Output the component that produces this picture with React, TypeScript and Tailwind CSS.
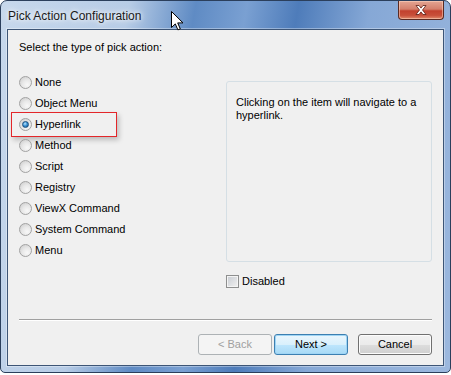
import React from 'react';

const options = [
  'None',
  'Object Menu',
  'Hyperlink',
  'Method',
  'Script',
  'Registry',
  'ViewX Command',
  'System Command',
  'Menu',
];

const Radio = ({ checked }: { checked?: boolean }) => (
  <span className="relative flex h-[13px] w-[13px] shrink-0 items-center justify-center rounded-full border border-[#a2a2a2] bg-[radial-gradient(circle_at_65%_70%,#f8f8f8_0%,#e8e8e8_45%,#c8c8c8_100%)]">
    {checked && (
      <span className="h-[7px] w-[7px] rounded-full border border-[#1b4f7e] bg-[radial-gradient(circle_at_40%_35%,#bfe6ff_0%,#3d95d6_45%,#0d4f8c_100%)]" />
    )}
  </span>
);

const CloseGlyph = () => (
  <svg width="12" height="10" viewBox="0 0 12 10">
    <path
      d="M1 0.5h3l2 2.6 2-2.6h3l-3.5 4.5 3.5 4.5h-3l-2-2.6-2 2.6h-3l3.5-4.5z"
      fill="#ffffff"
      stroke="#5c1c12"
      strokeWidth="0.8"
    />
  </svg>
);

const Cursor = () => (
  <svg width="13" height="20" viewBox="0 0 13 20" className="absolute left-[170px] top-[10px]">
    <path
      d="M0.5 0.5v16l3.8-3.6 2.6 6 2.4-1-2.6-6h5.3z"
      fill="#ffffff"
      stroke="#000000"
      strokeWidth="1"
      strokeLinejoin="round"
    />
  </svg>
);

export default function App() {
  return (
    <div className="h-[375px] w-[451px] bg-white font-['Liberation_Sans',Arial,sans-serif] text-[11px] text-black">
      <div className="relative flex h-[373px] w-[451px] flex-col rounded-t-[7px] rounded-b-[5px] border border-[#2b3f5c] bg-[linear-gradient(100deg,#c7d8ec_0%,#b7cce6_25%,#5f8bc4_38%,#7aa0d2_48%,#4e7cba_58%,#86a8d6_72%,#9cb8de_100%)] px-[6px] pb-[6px]">
        {/* Title bar */}
        <div className="flex h-[28px] items-start justify-between">
          <span className="pt-[8px] pl-[1px] text-[12px] leading-[14px] text-[#1a1a1a] [text-shadow:0_0_8px_#ffffff,0_0_4px_#ffffff]">
            Pick Action Configuration
          </span>
          <div className="flex h-[19px] w-[46px] items-center justify-center rounded-b-[4px] border border-t-0 border-[#5a2a22] bg-[linear-gradient(to_bottom,#e4a593_0%,#d4806c_45%,#c2412e_55%,#c8503a_80%,#e08a6c_100%)] shadow-[inset_0_0_0_1px_rgba(255,220,200,0.5)]">
            <CloseGlyph />
          </div>
        </div>

        {/* Client area */}
        <div className="flex flex-1 flex-col border border-[#3d5576] bg-[#f0f0f0] px-[11px] shadow-[0_0_0_1px_rgba(255,255,255,0.35)]">
          <div className="pt-[11px] leading-[13px]">Select the type of pick action:</div>

          <div className="mt-[18px] flex">
            <div className="flex w-[207px] flex-col">
              {options.map((opt, idx) => (
                <div key={opt} className="relative flex h-[21px] items-center gap-[3px] leading-[13px]">
                  <Radio checked={idx === 2} />
                  <span>{opt}</span>
                  {idx === 2 && (
                    <span className="absolute -left-[8px] -top-[2px] h-[25px] w-[106px] border border-[#e3262a] shadow-[2px_3px_5px_rgba(0,0,0,0.22)]" />
                  )}
                </div>
              ))}
            </div>

            <div className="mt-[9px] flex flex-col">
              <div className="h-[181px] w-[206px] rounded-[3px] border border-[#d5dfe5] pt-[14px] pr-[14px] pl-[9px] leading-[13px]">
                Clicking on the item will navigate to a hyperlink.
              </div>
              <div className="mt-[13px] flex items-center gap-[3px] leading-[13px]">
                <span className="flex h-[13px] w-[13px] items-center justify-center border border-[#8e8f8f] bg-[#f4f4f4]">
                  <span className="h-[9px] w-[9px] bg-[linear-gradient(135deg,#cbcfd5_0%,#eeeeee_100%)]" />
                </span>
                <span>Disabled</span>
              </div>
            </div>
          </div>

          {/* Footer */}
          <div className="mt-auto pb-[10px]">
            <div className="border-t border-b border-t-[#a0a0a0] border-b-white" />
            <div className="mt-[13px] flex">
              <button className="ml-auto flex h-[21px] w-[74px] items-center justify-center rounded-[3px] border border-[#adb2b5] bg-[#f4f4f4] text-[#a0a0a0]">
                &lt; Back
              </button>
              <button className="ml-[2px] flex h-[21px] w-[74px] items-center justify-center rounded-[3px] border border-[#3c7fb1] bg-[linear-gradient(to_bottom,#eaf6fd_0%,#d9f0fc_50%,#bee6fd_51%,#a7d9f5_100%)] shadow-[inset_0_0_0_1px_#9fd5f5]">
                Next &gt;
              </button>
              <button className="ml-[10px] flex h-[21px] w-[74px] items-center justify-center rounded-[3px] border border-[#707070] bg-[linear-gradient(to_bottom,#f2f2f2_0%,#ebebeb_50%,#dddddd_51%,#cfcfcf_100%)] shadow-[inset_0_0_0_1px_#fcfcfc]">
                Cancel
              </button>
            </div>
          </div>
        </div>

        <Cursor />
      </div>
    </div>
  );
}
